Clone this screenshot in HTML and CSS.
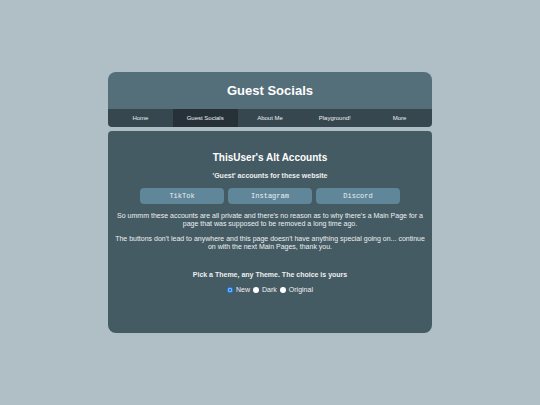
FILE: index.html
```
<!DOCTYPE html>
<html lang="en">
<head>
<meta charset="UTF-8">
<title>Guest Socials</title>
<link rel="stylesheet" href="styles.css">
</head>
<body>
	<div class="content">
		<header>
			<h1>Guest Socials</h1>
		</header>
		<nav>
			<a href="#home">Home</a>
			<a href="#socials" class="active">Guest Socials</a>
			<a href="#about">About Me</a>
			<a href="#playground">Playground!</a>
			<a href="#more">More</a>
		</nav>
		<main>
			<h2>ThisUser's Alt Accounts</h2>
			<h3>'Guest' accounts for these website</h3>
			<div class="buttons">
				<button type="button">TikTok</button>
				<button type="button">Instagram</button>
				<button type="button">Discord</button>
			</div>
			<p>So ummm these accounts are all private and there's no reason as to why there's a Main Page for a page that was supposed to be removed a long time ago.</p>
			<p>The buttons don't lead to anywhere and this page doesn't have anything special going on... continue on with the next Main Pages, thank you.</p>
			<!-- theme picker -->
			<h3 class="pick">Pick a Theme, any Theme. The choice is yours</h3>
			<div class="themes">
				<input type="radio" id="new" name="theme" value="new" checked><label for="new">New</label>
				<input type="radio" id="dark" name="theme" value="dark"><label for="dark">Dark</label>
				<input type="radio" id="original" name="theme" value="original"><label for="original">Original</label>
			</div>
		</main>
	</div>
</body>
</html>
```
FILE: styles.css
```
* {
	box-sizing: border-box;
	margin: 0;
	padding: 0;
}
body {
	min-height: 100vh;
	display: flex;
	align-items: center;
	justify-content: center;
	background-color: #b0bec5;
	color: #eceff1;
	font-family: "Liberation Sans", Arial, sans-serif;
	font-size: 7px;
	line-height: 8px;
	text-align: center;
}
.content {
	width: 60%;
}
header {
	padding: 11px 11px 10px;
	border-radius: 8px 8px 0 0;
	background-color: #546e7a;
}
h1 {
	color: #fff;
	font-size: 13px;
	line-height: 16px;
}
nav {
	display: flex;
	margin-bottom: 4px;
	border-radius: 0 0 4px 4px;
	background-color: #37474f;
	overflow: hidden;
}
nav a {
	flex: 1;
	padding: 5px 0;
	color: #eceff1;
	font-size: 6px;
	text-decoration: none;
}
nav a.active,
nav a:hover {
	background-color: #263238;
}
main {
	padding: 21px 5px 39px;
	border-radius: 4px 4px 8px 8px;
	background-color: #455b63;
}
h2 {
	margin-bottom: 8px;
	color: #fff;
	font-size: 10px;
	line-height: 12px;
}
h3 {
	margin-bottom: 8px;
	font-size: 7px;
}
.buttons {
	display: flex;
	justify-content: center;
	gap: 4px;
	margin: 0 27px 8px;
}
button {
	flex: 1;
	padding: 4px;
	border: none;
	border-radius: 4px;
	background-color: #5f8799;
	color: #eceff1;
	font-family: "Liberation Mono", monospace;
	font-size: 7px;
	line-height: 8px;
	cursor: pointer;
}
p {
	margin-bottom: 7px;
}
.pick {
	margin: 20px 0 7px;
}
.themes {
	display: flex;
	align-items: center;
	justify-content: center;
	gap: 3px;
}
input[type=radio] {
	appearance: none;
	width: 6px;
	height: 6px;
	border-radius: 50%;
	background-color: #fff;
}
input[type=radio]:checked {
	border: 1px solid #0075ff;
	background-image: radial-gradient(#0075ff 1px, #fff 2px);
}
```
